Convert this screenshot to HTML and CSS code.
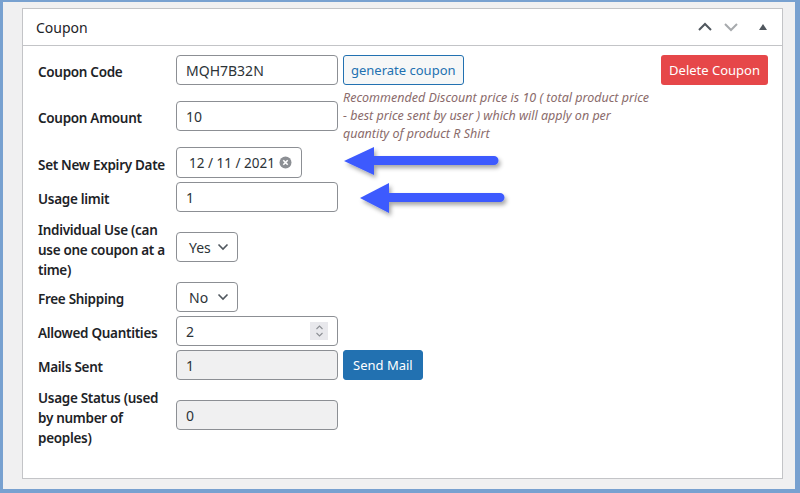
FILE: index.html
```html
<!DOCTYPE html>
<html lang="en">
<head>
    <meta charset="UTF-8">
    <title>Coupon</title>
    <link rel="stylesheet" href="styles.css">
</head>
<body>
    <div class="postbox">
        <div class="postbox-header">
            <h2>Coupon</h2>
            <div class="handle-actions">
                <svg width="16" height="10" viewBox="0 0 16 10"><path d="M2 8 L8 2 L14 8" fill="none" stroke="#50575e" stroke-width="2"/></svg>
                <svg width="16" height="10" viewBox="0 0 16 10"><path d="M2 2 L8 8 L14 2" fill="none" stroke="#a7aaad" stroke-width="2"/></svg>
                <svg class="toggle" width="10" height="8" viewBox="0 0 10 8"><path d="M1 7 L5 1 L9 7 Z" fill="#50575e"/></svg>
            </div>
        </div>

        <div class="inside">
            <div class="form-table">
                <label class="row-label">Coupon Code</label>
                <div class="row-field">
                    <input type="text" class="regular" value="MQH7B32N">
                    <button class="btn-secondary">generate coupon</button>
                    <button class="btn-delete">Delete Coupon</button>
                </div>

                <label class="row-label">Coupon Amount</label>
                <div class="row-field">
                    <input type="text" class="regular" value="10">
                    <p class="description">Recommended Discount price is 10 ( total product price - best price sent by user ) which will apply on per quantity of product R Shirt</p>
                </div>

                <label class="row-label">Set New Expiry Date</label>
                <div class="row-field">
                    <div class="date-box">
                        <span>12 / 11 / 2021</span>
                        <svg width="13" height="13" viewBox="0 0 13 13"><circle cx="6.5" cy="6.5" r="6" fill="#8c8f94"/><path d="M4.3 4.3 L8.7 8.7 M8.7 4.3 L4.3 8.7" stroke="#fff" stroke-width="1.6"/></svg>
                    </div>
                </div>

                <label class="row-label">Usage limit</label>
                <div class="row-field">
                    <input type="text" class="regular" value="1">
                </div>

                <label class="row-label multi">Individual Use (can use one coupon at a time)</label>
                <div class="row-field">
                    <div class="select-box"><span>Yes</span><svg width="12" height="8" viewBox="0 0 12 8"><path d="M1.5 1.5 L6 6 L10.5 1.5" fill="none" stroke="#50575e" stroke-width="1.6"/></svg></div>
                </div>

                <label class="row-label">Free Shipping</label>
                <div class="row-field">
                    <div class="select-box"><span>No</span><svg width="12" height="8" viewBox="0 0 12 8"><path d="M1.5 1.5 L6 6 L10.5 1.5" fill="none" stroke="#50575e" stroke-width="1.6"/></svg></div>
                </div>

                <label class="row-label">Allowed Quantities</label>
                <div class="row-field">
                    <div class="number-box">
                        <span>2</span>
                        <span class="spinner"><svg width="9" height="14" viewBox="0 0 9 14"><path d="M1.5 5 L4.5 2 L7.5 5 M1.5 9 L4.5 12 L7.5 9" fill="none" stroke="#8c8f94" stroke-width="1.1"/></svg></span>
                    </div>
                </div>

                <label class="row-label">Mails Sent</label>
                <div class="row-field">
                    <input type="text" class="regular" value="1" disabled>
                    <button class="btn-primary">Send Mail</button>
                </div>

                <label class="row-label multi">Usage Status (used by number of peoples)</label>
                <div class="row-field">
                    <input type="text" class="regular" value="0" disabled>
                </div>
            </div>

            <svg class="arrows" width="180" height="80" viewBox="0 0 180 80">
                <defs>
                    <filter id="shadow" x="-10%" y="-20%" width="130%" height="160%">
                        <feDropShadow dx="2" dy="3" stdDeviation="2" flood-color="#000" flood-opacity="0.35"/>
                    </filter>
                </defs>
                <g fill="#3d5afe" filter="url(#shadow)">
                    <path d="M2 16 L32 2 L32 11 L152 11 A4.5 4.5 0 0 1 152 20 L32 20 L32 30 Z"/>
                    <path d="M18 53 L47 38 L47 48 L158 48 A4.5 4.5 0 0 1 158 57 L47 57 L47 68 Z"/>
                </g>
            </svg>
        </div>
    </div>
</body>
</html>
```

FILE: styles.css
```css
* {
    margin: 0;
    padding: 0;
    box-sizing: border-box;
}

html, body {
    height: 100%;
}

body {
    font-family: "Noto Sans", "Open Sans", sans-serif;
    font-size: 14px;
    color: #1d2327;
    background: #f0f0f1;
    border-style: solid;
    border-color: #78a1d0;
    border-width: 2px 5px 4px 3px;
    padding: 6px 12px 10px 19px;
    display: flex;
    flex-direction: column;
}

.postbox {
    flex: 1;
    background: white;
    border: 1px solid #c3c4c7;
    display: flex;
    flex-direction: column;
}

.postbox-header {
    height: 37px;
    border-bottom: 1px solid #c3c4c7;
    display: flex;
    align-items: center;
    justify-content: space-between;
    padding: 0 14px 0 13px;
}

.postbox-header h2 {
    font-size: 14px;
    font-weight: 400;
}

.handle-actions {
    display: flex;
    align-items: center;
    gap: 10px;
}

.handle-actions .toggle {
    margin-left: 9px;
}

.inside {
    position: relative;
    padding: 9px 14px 0 15px;
}

.form-table {
    display: grid;
    grid-template-columns: 138px 1fr;
    row-gap: 4px;
    align-items: center;
}

.row-label {
    font-weight: 600;
    font-size: 13.5px;
    letter-spacing: -0.3px;
    line-height: 20px;
    color: #1d2327;
    padding: 2px 6px 0 0;
    margin-bottom: -2px;
}

.row-label.multi {
    padding-top: 4px;
}

.row-field {
    display: flex;
    align-items: center;
    gap: 5px;
}

input.regular {
    width: 162px;
    height: 30px;
    border: 1px solid #8c8f94;
    border-radius: 4px;
    padding: 0 9px;
    font-family: inherit;
    font-size: 14px;
    color: #2c3338;
    background: white;
}

input.regular:disabled {
    background: #f0f0f1;
    color: #2c3338;
}

.btn-secondary {
    height: 30px;
    padding: 0 7px;
    border: 1px solid #2271b1;
    border-radius: 3px;
    background: #f6f7f7;
    color: #2271b1;
    font-family: inherit;
    font-size: 13px;
}

.btn-delete {
    margin-left: auto;
    height: 30px;
    padding: 0 8px;
    border: none;
    border-radius: 3px;
    background: #e64749;
    color: white;
    font-family: inherit;
    font-size: 13px;
}

.btn-primary {
    height: 30px;
    padding: 0 9px;
    border: 1px solid #2271b1;
    border-radius: 3px;
    background: #2271b1;
    color: white;
    font-family: inherit;
    font-size: 13px;
}

.description {
    width: 308px;
    font-style: italic;
    font-size: 12.5px;
    line-height: 18px;
    color: #8a6b6b;
}

.date-box {
    width: 126px;
    height: 31px;
    border: 1px solid #8c8f94;
    border-radius: 4px;
    display: flex;
    align-items: center;
    justify-content: space-between;
    padding: 0 9px 0 12px;
    font-size: 13.5px;
    color: #2c3338;
}

.select-box {
    width: 62px;
    height: 30px;
    border: 1px solid #8c8f94;
    border-radius: 4px;
    display: flex;
    align-items: center;
    justify-content: space-between;
    padding: 0 8px 0 12px;
    color: #2c3338;
}

.number-box {
    width: 162px;
    height: 30px;
    border: 1px solid #8c8f94;
    border-radius: 4px;
    display: flex;
    align-items: center;
    justify-content: space-between;
    padding: 0 9px 0 9px;
    color: #2c3338;
}

.spinner {
    width: 18px;
    height: 18px;
    background: #e8e8ec;
    display: flex;
    align-items: center;
    justify-content: center;
}

.arrows {
    position: absolute;
    left: 319px;
    top: 99px;
}
```
